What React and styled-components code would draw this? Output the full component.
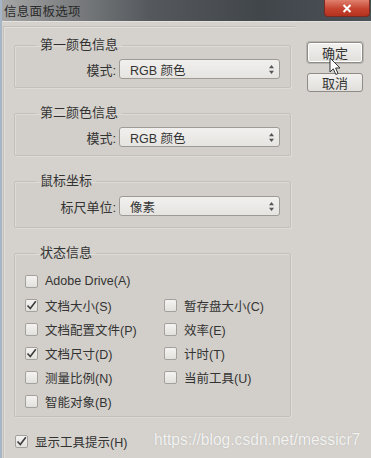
import styled, { createGlobalStyle } from "styled-components";

const GlobalStyle = createGlobalStyle`
  html, body {
    margin: 0;
    padding: 0;
    background: #d5d2cd;
  }
  body {
    font-family: "Liberation Sans", "Noto Sans CJK SC", sans-serif;
    color: #2f2f2f;
  }
`;

const Window = styled.div`
  position: relative;
  width: 371px;
  height: 458px;
  box-sizing: border-box;
  border-left: 2px solid #a7b6c6;
  background: #d5d2cd;
  overflow: hidden;
  display: flex;
  flex-direction: column;
`;

const TitleBar = styled.div`
  height: 21px;
  flex: none;
  display: flex;
  align-items: center;
  justify-content: space-between;
  padding-left: 2px;
  background: linear-gradient(90deg, #a6a6a6 0%, #7d7f81 18%, #55595d 40%, #41464b 70%, #4a5157 100%);
  border-bottom: 1px solid #e4e2de;
`;

const Title = styled.span`
  font-size: 12.5px;
  color: #2a2a2a;
  letter-spacing: 0.3px;
`;

const CloseButton = styled.div`
  align-self: flex-start;
  width: 44px;
  height: 16px;
  margin-right: 1px;
  border-radius: 0 0 4px 4px;
  background: linear-gradient(180deg, #e0806e 0%, #c5432f 55%, #b5321f 100%);
  border: 1px solid #7a2a22;
  border-top: none;
  display: flex;
  align-items: center;
  justify-content: center;
`;

const Body = styled.div`
  flex: 1;
  display: flex;
  padding: 4px 0 0 1px;
`;

const Panel = styled.div`
  width: 292px;
  box-sizing: border-box;
  padding: 10px 0 0 10px;
  border-top: 1px solid #c4c1bc;
  border-left: 1px solid #c4c1bc;
  box-shadow: inset 1px 1px 0 #e2dfdb;
  display: flex;
  flex-direction: column;
  gap: 17px;
`;

const Group = styled.fieldset`
  margin: 0;
  width: 277px;
  box-sizing: border-box;
  padding: ${(p) => p.$pad || "6px 10px 8px 0"};
  border: 1px solid #c3c0bb;
  border-radius: 2px;
  box-shadow: inset 1px 1px 0 #dedbd6, 1px 1px 0 #dedbd6;
  background: #d2cfca;
`;

const Legend = styled.legend`
  margin-left: 21px;
  padding: 0 4px;
  font-size: 13px;
  line-height: 16px;
  color: #333;
`;

const FormRow = styled.div`
  display: flex;
  align-items: center;
  justify-content: flex-end;
  gap: 3px;
`;

const Label = styled.span`
  font-size: 13px;
  color: #333;
`;

const Select = styled.div`
  width: 161px;
  height: 20px;
  box-sizing: border-box;
  border: 1px solid #9e9b96;
  border-radius: 3px;
  background: linear-gradient(180deg, #f1f0ee 0%, #e6e4e1 100%);
  display: flex;
  align-items: center;
  justify-content: space-between;
  padding: 0 4px 0 10px;
  font-size: 12.5px;
  color: #333;
`;

const CheckGrid = styled.div`
  display: grid;
  grid-template-columns: 139px 1fr;
  grid-auto-rows: 24px;
  padding: 8px 0 3px 10px;
`;

const CheckItem = styled.label`
  display: flex;
  align-items: center;
  gap: 7px;
  font-size: 12.5px;
  color: #333;
  grid-column: ${(p) => p.$col || "auto"};
`;

const Box = styled.span`
  width: 13px;
  height: 13px;
  box-sizing: border-box;
  border: 1px solid #a4a19c;
  border-radius: 2px;
  background: linear-gradient(180deg, #f4f3f1 0%, #e3e1de 100%);
  display: flex;
  align-items: center;
  justify-content: center;
  flex: none;
`;

const FooterRow = styled.div`
  margin-top: -2px;
  padding-left: 1px;
`;

const Buttons = styled.div`
  display: flex;
  flex-direction: column;
  gap: 10px;
  padding: 16px 0 0 12px;
`;

const Button = styled.div`
  width: 56px;
  height: ${(p) => (p.$primary ? "21px" : "19px")};
  box-sizing: border-box;
  border: 1px solid #8f8c87;
  border-radius: 3px;
  background: linear-gradient(180deg, #f2f1ef 0%, #e1dfdc 100%);
  box-shadow: ${(p) => (p.$primary ? "0 0 0 1px #b8b5b0, inset 0 0 0 1px #fff" : "none")};
  display: flex;
  align-items: center;
  justify-content: center;
  font-size: 13px;
  color: #333;
`;

const Cursor = styled.svg`
  position: absolute;
  left: 327px;
  top: 57px;
`;

const Watermark = styled.div`
  position: absolute;
  left: 152px;
  top: 431px;
  font-family: "Liberation Sans", sans-serif;
  font-size: 15.6px;
  color: rgba(255, 255, 255, 0.85);
  text-shadow: 0 0 1px rgba(120, 120, 120, 0.4);
  white-space: nowrap;
`;

const Check = () => (
  <svg width="11" height="11" viewBox="0 0 11 11">
    <path d="M1.5 5.5 L4.3 8.5 L9.8 1.2" fill="none" stroke="#3c3c3c" strokeWidth="1.6" />
  </svg>
);

const SelectArrows = () => (
  <svg width="7" height="11" viewBox="0 0 7 11">
    <path d="M3.5 1 L6 4.2 H1 Z M3.5 10 L6 6.8 H1 Z" fill="#555" />
  </svg>
);

const Checkbox = ({ label, checked, col }) => (
  <CheckItem $col={col}>
    <Box>{checked && <Check />}</Box>
    {label}
  </CheckItem>
);

const SelectRow = ({ label, value }) => (
  <FormRow>
    <Label>{label}</Label>
    <Select>
      <span>{value}</span>
      <SelectArrows />
    </Select>
  </FormRow>
);

export default function App() {
  return (
    <>
      <GlobalStyle />
      <Window>
        <TitleBar>
          <Title>信息面板选项</Title>
          <CloseButton>
            <svg width="10" height="9" viewBox="0 0 10 9">
              <path d="M1.5 1 L8.5 8 M8.5 1 L1.5 8" stroke="#fff" strokeWidth="2" />
            </svg>
          </CloseButton>
        </TitleBar>
        <Body>
          <Panel>
            <Group>
              <Legend>第一颜色信息</Legend>
              <SelectRow label="模式:" value="RGB 颜色" />
            </Group>
            <Group>
              <Legend>第二颜色信息</Legend>
              <SelectRow label="模式:" value="RGB 颜色" />
            </Group>
            <Group $pad="7px 10px 11px 0">
              <Legend>鼠标坐标</Legend>
              <SelectRow label="标尺单位:" value="像素" />
            </Group>
            <Group $pad="0">
              <Legend>状态信息</Legend>
              <CheckGrid>
                <Checkbox label="Adobe Drive(A)" col="1" />
                <Checkbox label="文档大小(S)" checked col="1" />
                <Checkbox label="暂存盘大小(C)" col="2" />
                <Checkbox label="文档配置文件(P)" col="1" />
                <Checkbox label="效率(E)" col="2" />
                <Checkbox label="文档尺寸(D)" checked col="1" />
                <Checkbox label="计时(T)" col="2" />
                <Checkbox label="测量比例(N)" col="1" />
                <Checkbox label="当前工具(U)" col="2" />
                <Checkbox label="智能对象(B)" col="1" />
              </CheckGrid>
            </Group>
            <FooterRow>
              <Checkbox label="显示工具提示(H)" checked />
            </FooterRow>
          </Panel>
          <Buttons>
            <Button $primary>确定</Button>
            <Button>取消</Button>
          </Buttons>
        </Body>
        <Cursor width="13" height="19" viewBox="0 0 13 19">
          <path d="M1 1 L1 15 L4.3 11.8 L6.8 17.5 L9 16.5 L6.6 11 L11 11 Z" fill="#fff" stroke="#333" strokeWidth="1" strokeLinejoin="round" />
        </Cursor>
        <Watermark>https://blog.csdn.net/messicr7</Watermark>
      </Window>
    </>
  );
}
